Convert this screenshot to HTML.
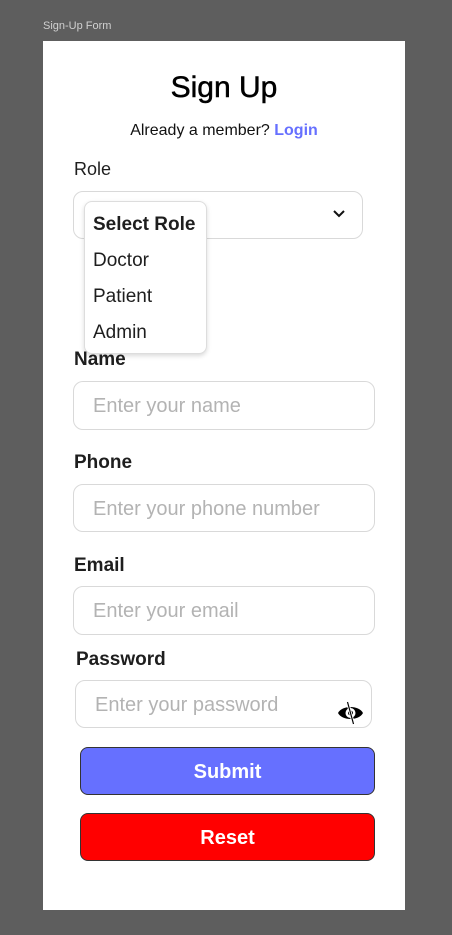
<!DOCTYPE html>
<html><head><meta charset="utf-8"><style>
*{margin:0;padding:0;box-sizing:border-box}
body{width:452px;height:935px;background:#5e5e5e;position:relative;font-family:"Liberation Sans",sans-serif;overflow:hidden}
.a{position:absolute;white-space:nowrap}
.card{position:absolute;left:43px;top:41px;width:362px;height:869px;background:#fff}
.inp{position:absolute;border:1px solid #d9d9d9;border-radius:10px;background:#fff;color:#b3b3b3;font-size:20px;padding-left:19px;padding-top:2px;display:flex;align-items:center}
.lbl{position:absolute;font-weight:bold;font-size:19px;color:#1e1e1e}
.btn{position:absolute;border:1px solid #333;border-radius:8px;color:#fff;font-weight:bold;font-size:20px;display:flex;align-items:center;justify-content:center;padding-top:2px}
</style></head><body>
<div class="a" style="left:43px;top:20px;font-size:11px;color:#d0d0d0">Sign-Up Form</div>
<div class="card"></div>
<div class="a" style="left:0;width:448px;text-align:center;top:71px;font-size:30px;color:#000;-webkit-text-stroke:0.5px #000">Sign Up</div>
<div class="a" style="left:0;width:448px;text-align:center;top:122px;font-size:16px;color:#111">Already a member? <b style="color:#6670ff">Login</b></div>
<div class="a" style="left:74px;top:159px;font-size:18px;color:#1e1e1e">Role</div>
<div class="inp" style="left:73px;top:191px;width:290px;height:48px"></div>
<svg class="a" style="left:332px;top:209px" width="14" height="10" viewBox="0 0 14 10"><path d="M2 2l5 5 5-5" fill="none" stroke="#111" stroke-width="2"/></svg>
<div class="a" style="left:84px;top:201px;width:123px;height:153px;background:#fff;border:1px solid #ddd;border-radius:8px;box-shadow:0 2px 5px rgba(0,0,0,.15)"></div>
<div class="a" style="left:93px;top:214px;font-size:19px;font-weight:bold;color:#1e1e1e">Select Role</div>
<div class="a" style="left:93px;top:250px;font-size:19px;color:#1e1e1e">Doctor</div>
<div class="a" style="left:93px;top:286px;font-size:19px;color:#1e1e1e">Patient</div>
<div class="a" style="left:93px;top:322px;font-size:19px;color:#1e1e1e">Admin</div>
<div class="lbl" style="left:74px;top:349px">Name</div>
<div class="inp" style="left:73px;top:381px;width:302px;height:49px">Enter your name</div>
<div class="lbl" style="left:74px;top:452px">Phone</div>
<div class="inp" style="left:73px;top:484px;width:302px;height:48px">Enter your phone number</div>
<div class="lbl" style="left:74px;top:555px">Email</div>
<div class="inp" style="left:73px;top:586px;width:302px;height:49px">Enter your email</div>
<div class="lbl" style="left:76px;top:649px">Password</div>
<div class="inp" style="left:75px;top:680px;width:297px;height:48px">Enter your password</div>
<svg class="a" style="left:337px;top:701px" width="27" height="24" viewBox="0 0 27 24"><path d="M1 12C5 4 22 4 26 12C22 20 5 20 1 12Z" fill="#000"/><circle cx="13.5" cy="12" r="5" fill="#fff"/><circle cx="13.5" cy="12" r="2.5" fill="#000"/><path d="M10.5 1L16.5 23" stroke="#fff" stroke-width="3"/><path d="M10.5 1L16.5 23" stroke="#000" stroke-width="1.2"/></svg>
<div class="btn" style="left:80px;top:747px;width:295px;height:48px;background:#6670ff">Submit</div>
<div class="btn" style="left:80px;top:813px;width:295px;height:48px;background:#ff0000">Reset</div>
</body></html>
